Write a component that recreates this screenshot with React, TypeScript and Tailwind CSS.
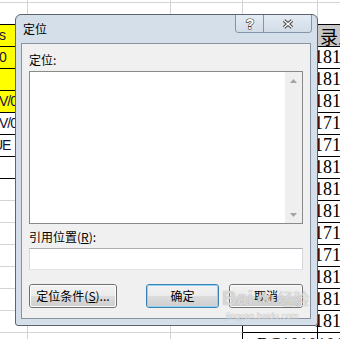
import React from "react";

// spreadsheet behind the dialog: 17 rows of 22px, first gridline at y=2
type Cell = { t?: string; yellow?: boolean; black?: boolean; shift?: boolean };

const colA: Cell[] = [
  {},
  { black: true },
  { t: "s", yellow: true, black: true },
  { t: "0", yellow: true, black: true },
  { yellow: true, black: true },
  { t: "V/0", yellow: true, black: true },
  { t: "V/0", black: true },
  { t: "UE", black: true, shift: true },
  { black: true },
  {}, {}, {}, {}, {}, {}, {}, {},
];

const nums = ["181", "181", "181", "171", "171", "181", "181", "181", "171", "171", "181", "181", "181"];

const rows = Array.from({ length: 17 }, (_, i) => i);

const Sheet = () => (
  <div className="-mt-[19px] flex">
    {/* column A */}
    <div className="flex w-[28px] shrink-0 flex-col">
      {colA.map((c, i) => (
        <div
          key={i}
          className={`flex h-[22px] items-center overflow-hidden border-r border-r-[#d4d4d4] border-b ${
            c.black ? "border-b-black" : "border-b-[#d4d4d4]"
          } ${c.yellow ? "bg-[#ffff00]" : ""}`}
        >
          <span
            className={`whitespace-nowrap font-['Liberation_Sans',sans-serif] text-[14px] tracking-[-1px] text-[#14143c] ${
              c.shift ? "-ml-[7px]" : "-ml-[1px]"
            }`}
          >
            {c.t}
          </span>
        </div>
      ))}
    </div>
    {/* column B */}
    <div className="flex w-[143px] shrink-0 flex-col">
      {rows.map((i) => (
        <div key={i} className="h-[22px] border-r border-b border-[#d4d4d4]" />
      ))}
    </div>
    {/* column C */}
    <div className="flex w-[72px] shrink-0 flex-col">
      {rows.map((i) => (
        <div
          key={i}
          className={`h-[22px] border-b border-b-[#d4d4d4] border-r ${
            i >= 15 ? "border-r-black" : "border-r-[#d4d4d4]"
          }`}
        />
      ))}
    </div>
    {/* column D */}
    <div className="flex w-[75px] shrink-0 flex-col">
      {rows.map((i) => (
        <div
          key={i}
          className={`flex h-[22px] items-center border-b border-r ${
            i === 15 ? "border-b-black" : "border-b-[#d4d4d4]"
          } ${i >= 2 ? "border-r-black" : "border-r-[#d4d4d4]"}`}
        >
          {i === 16 && (
            <span className="ml-[14px] mt-[4px] whitespace-nowrap font-['Liberation_Serif',serif] text-[18px] text-black">
              BC1010101010
            </span>
          )}
        </div>
      ))}
    </div>
    {/* column E */}
    <div className="flex w-[60px] shrink-0 flex-col">
      {rows.map((i) => (
        <div
          key={i}
          className={`flex h-[22px] items-center whitespace-nowrap border-b ${
            i >= 1 && i <= 15 ? "border-b-black" : "border-b-[#d4d4d4]"
          } ${i === 2 ? "bg-[#c8c8c8]" : ""}`}
        >
          {i === 2 && (
            <span className="ml-[2px] font-['Noto_Sans_CJK_SC',sans-serif] text-[18px] leading-[20px] text-black">
              录入
            </span>
          )}
          {i >= 3 && i <= 15 && (
            <span className="-ml-[4px] -mt-[2px] font-['Liberation_Serif',serif] text-[18px] leading-[20px] text-black">
              {nums[i - 3]}0101
            </span>
          )}
        </div>
      ))}
    </div>
  </div>
);

const Btn = ({
  children,
  w,
  primary,
}: {
  children: React.ReactNode;
  w: string;
  primary?: boolean;
}) => (
  <div
    className={`h-[24px] ${w} rounded-[3px] border ${
      primary ? "border-[#3c7fb1]" : "border-[#707070]"
    }`}
  >
    <div
      className={`flex h-full w-full items-center justify-center rounded-[2px] border bg-[linear-gradient(#f2f2f2_0%,#ebebeb_50%,#dddddd_50%,#cfcfcf_100%)] text-[12px] leading-[16px] text-black ${
        primary ? "border-[#8fd3f5]" : "border-[#fbfbfb]"
      }`}
    >
      {children}
    </div>
  </div>
);

const Dialog = () => (
  <div className="absolute left-[15px] top-[14px] z-10 flex h-[312px] w-[303px] flex-col rounded-t-[6px] rounded-b-[3px] border border-[#5c6470] bg-[#d5dfea] font-['Noto_Sans_CJK_SC','Noto_Sans',sans-serif]">
    {/* title bar */}
    <div className="flex h-[28px] items-start justify-between">
      <span className="ml-[7px] mt-[6px] text-[12px] leading-[16px] text-black">定位</span>
      <div className="mr-[5px] flex h-[18px] overflow-hidden rounded-b-[4px] border border-t-0 border-[#8494aa]">
        <div className="flex w-[28px] items-center justify-center border-r border-[#8494aa] bg-[linear-gradient(#e4ebf3,#d2dce8)]">
          <svg width="10" height="14" viewBox="0 0 10 14">
            <text
              x="5"
              y="12"
              textAnchor="middle"
              fontSize="14"
              fontWeight="700"
              fontFamily="Liberation Sans, sans-serif"
              fill="#ffffff"
              stroke="#3a3a3a"
              strokeWidth="1.2"
              paintOrder="stroke"
            >
              ?
            </text>
          </svg>
        </div>
        <div className="flex w-[47px] items-center justify-center bg-[linear-gradient(#e4ebf3,#d2dce8)]">
          <svg width="12" height="10" viewBox="0 0 12 10">
            <path d="M2 1.5 L10 8.5 M10 1.5 L2 8.5" stroke="#3a3a3a" strokeWidth="3.4" />
            <path d="M2 1.5 L10 8.5 M10 1.5 L2 8.5" stroke="#ffffff" strokeWidth="1.5" />
          </svg>
        </div>
      </div>
    </div>

    {/* client area */}
    <div className="mb-[6px] ml-[5px] mr-[6px] flex flex-1 flex-col border border-[#8793a3] bg-[#f0f0f0] px-[7px] text-[12px] leading-[16px] text-black">
      <div className="mt-[8px]">定位:</div>
      <div className="mt-[3px] flex h-[153px] border border-[#8a8a8a] bg-white">
        <div className="flex-1" />
        <div className="flex w-[17px] flex-col bg-[#efefef]">
          <div className="flex h-[17px] items-center justify-center">
            <svg width="7" height="4" viewBox="0 0 7 4">
              <path d="M3.5 0 L7 4 L0 4 Z" fill="#a3a3a3" />
            </svg>
          </div>
          <div className="flex-1" />
          <div className="flex h-[17px] items-center justify-center">
            <svg width="7" height="4" viewBox="0 0 7 4">
              <path d="M0 0 L7 0 L3.5 4 Z" fill="#a3a3a3" />
            </svg>
          </div>
        </div>
      </div>

      <div className="mt-[5px]">
        引用位置(<span className="underline">R</span>):
      </div>
      <div className="mt-[3px] h-[22px] border border-[#abadb3] border-x-[#d5d7dc] border-b-[#dfe3e8] bg-white" />

      <div className="mt-[14px] flex gap-[10px]">
        <Btn w="w-[88px]">
          定位条件(<span className="underline">S</span>)...
        </Btn>
        <div className="flex-1" />
        <Btn w="w-[73px]" primary>
          确定
        </Btn>
        <Btn w="w-[74px]">取消</Btn>
      </div>
    </div>
  </div>
);

export default function App() {
  return (
    <div className="relative h-[339px] w-[340px] overflow-hidden bg-white">
      <Sheet />
      <Dialog />
      {/* baidu watermark */}
      <div className="pointer-events-none absolute left-[222px] top-[288px] z-20 flex flex-col items-start">
        <div className="flex items-end font-['Liberation_Sans',sans-serif] text-[20px] font-bold leading-[20px] text-white/60 [text-shadow:0_0_1px_#9a9a9a]">
          <span>Bai</span>
          <span className="ml-[4px] text-[14px]">du</span>
          <span className="ml-[3px] font-['Noto_Sans_CJK_SC',sans-serif] text-[16px] font-normal">经验</span>
        </div>
        <span className="ml-[4px] mt-[3px] font-['Liberation_Sans',sans-serif] text-[9px] leading-[10px] text-white/50 [text-shadow:0_0_1px_#a8a8a8]">
          jingyan.baidu.com
        </span>
      </div>
    </div>
  );
}
